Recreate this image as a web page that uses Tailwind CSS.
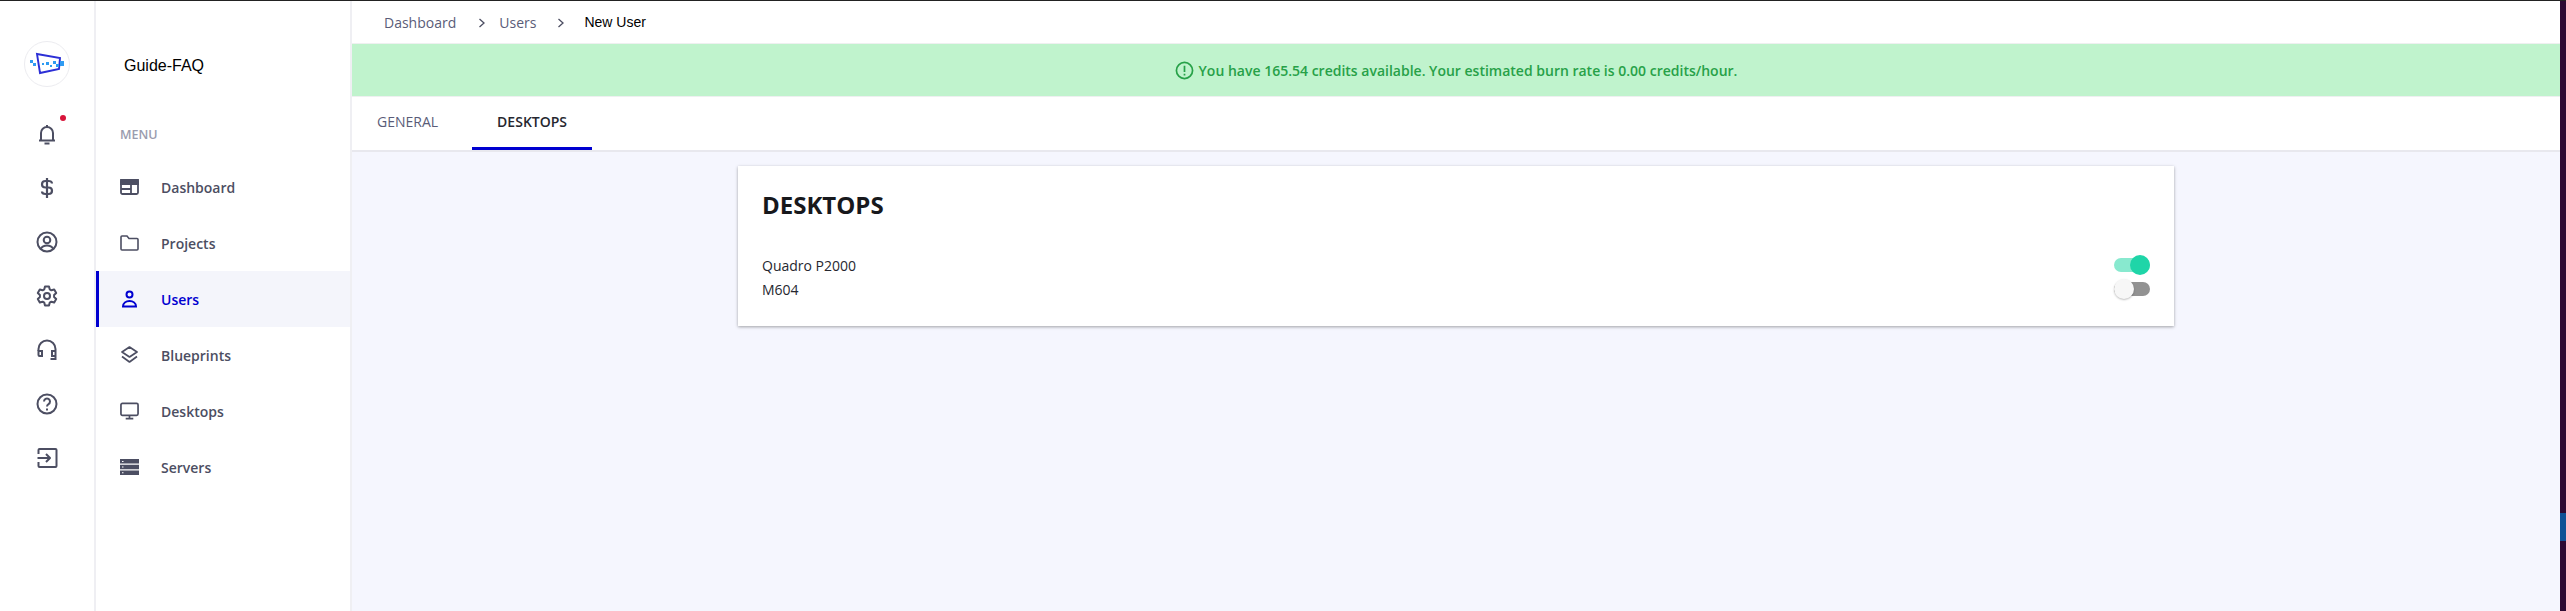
<!DOCTYPE html>
<html lang="en">
  <head>
    <meta charset="utf-8" />
    <title>New User</title>
    <script src="https://cdn.jsdelivr.net/npm/@tailwindcss/browser@4"></script>
  </head>
  <body class="h-screen overflow-hidden bg-white font-['Open_Sans',sans-serif]">
    <div class="h-px bg-[#222222]"></div>
    <div class="flex h-[610px]">
      <!-- Icon rail -->
      <div class="w-[96px] shrink-0 border-r-2 border-[#efeff3] flex flex-col items-center text-[#4c4e62]">
        <div class="mt-[40px] w-[46px] h-[46px] rounded-full border border-[#ececf0] flex items-center justify-center">
          <svg width="38" height="26" viewBox="0 0 38 26" fill="none">
            <path d="M9 3 L32 7 L31 18 L12 22 Z" stroke="#2c2fd6" stroke-width="1.900" />
            <g fill="#2f9bf2">
              <rect x="2" y="9" width="3" height="3" /><rect x="5" y="12" width="3" height="3" /><rect x="14" y="12" width="2" height="2" />
              <rect x="18" y="11" width="3" height="3" /><rect x="22" y="14" width="2" height="2" /><rect x="25" y="10" width="3" height="3" />
              <rect x="28" y="13" width="3" height="3" /><rect x="32" y="10" width="4" height="5" />
            </g>
          </svg>
        </div>
        <div class="mt-[29px] flex flex-col gap-[18px]">
          <div class="relative w-9 h-9 flex items-center justify-center">
            <span class="absolute right-[-1px] top-[-1px] w-[6px] h-[6px] rounded-full bg-[#d8143a]"></span>
            <svg width="24" height="24" viewBox="0 0 24 24" fill="none" stroke="currentColor" stroke-width="2"><path d="M4 18.500h16M6 18V11a6 6 0 0 1 12 0v7M9.500 21.500h5M12 3v2" /></svg>
          </div>
          <div class="w-9 h-9 flex items-center justify-center">
            <svg width="24" height="24" viewBox="0 0 24 24" fill="none" stroke="currentColor" stroke-width="2.200"><path d="M17 7.500C17 6 15.500 5 13.500 5h-3C8.500 5 7 6.300 7 8.200S8.500 11.500 10.500 11.500h3c2 0 3.500 1.300 3.500 3.200S15.500 18 13.500 18h-3C8.500 18 7 17 7 15.500M12 2v20" /></svg>
          </div>
          <div class="w-9 h-9 flex items-center justify-center">
            <svg width="24" height="24" viewBox="0 0 24 24" fill="none" stroke="currentColor" stroke-width="2"><circle cx="12" cy="12" r="9.500" /><circle cx="12" cy="10" r="3.300" /><path d="M5.500 19c1.500-2.500 4-3.500 6.500-3.500s5 1 6.500 3.500" /></svg>
          </div>
          <div class="w-9 h-9 flex items-center justify-center">
            <svg width="24" height="24" viewBox="0 0 24 24" fill="none" stroke="currentColor" stroke-width="2" stroke-linejoin="round"><path d="M10 2.500h4l.7 2.800 1.700 1 2.800-.8 2 3.500-2.100 2v2l2.100 2-2 3.500-2.800-.8-1.700 1-.7 2.800h-4l-.7-2.800-1.700-1-2.800.8-2-3.500 2.100-2v-2l-2.100-2 2-3.500 2.800.8 1.700-1z" /><circle cx="12" cy="12" r="3" /></svg>
          </div>
          <div class="w-9 h-9 flex items-center justify-center">
            <svg width="24" height="24" viewBox="0 0 24 24" fill="none" stroke="currentColor" stroke-width="2"><path d="M3.500 13v-2a8.500 8.500 0 0 1 17 0v10h-5" /><path d="M3.500 13h3.500v5H4.500a1 1 0 0 1-1-1zM20.500 13H17v5h3.500" /></svg>
          </div>
          <div class="w-9 h-9 flex items-center justify-center">
            <svg width="24" height="24" viewBox="0 0 24 24" fill="none" stroke="currentColor" stroke-width="2"><circle cx="12" cy="12" r="9.500" /><path d="M9 9.500a3 3 0 1 1 4.500 2.600c-1 .6-1.500 1.100-1.500 2.400" /><path d="M12 16.500v2" /></svg>
          </div>
          <div class="w-9 h-9 flex items-center justify-center">
            <svg width="24" height="24" viewBox="0 0 24 24" fill="none" stroke="currentColor" stroke-width="2" stroke-linejoin="round"><path d="M3.500 8V4a1 1 0 0 1 1-1h16a1 1 0 0 1 1 1v16a1 1 0 0 1-1 1h-16a1 1 0 0 1-1-1v-4" /><path d="M2.500 12h12M11 8l4 4-4 4" /></svg>
          </div>
        </div>
      </div>

      <!-- Menu sidebar -->
      <div class="w-[256px] shrink-0 border-r-2 border-[#efeff3]">
        <p class="pl-[28px] pt-[56px] font-['Liberation_Sans',sans-serif] text-[16px] leading-[18px] text-black">Guide-FAQ</p>
        <p class="pl-[24px] mt-[51px] text-[12.500px] leading-[18px] font-semibold text-[#9a9cae]">MENU</p>
        <nav class="mt-[15px] text-[14px] font-semibold text-[#4c4e62]">
          <a class="flex items-center h-[56px] pl-[24px] gap-[22px]">
            <svg class="shrink-0" width="19" height="16" viewBox="0 0 19 16" fill="none" stroke="currentColor" stroke-width="1.800"><rect x="1" y="1" width="17" height="14" rx="1.500" /><path d="M1 1h17v4H1z" fill="currentColor" /><path d="M1 10h10M11 5v10" /></svg>
            Dashboard
          </a>
          <a class="flex items-center h-[56px] pl-[24px] gap-[22px]">
            <svg class="shrink-0" width="19" height="16" viewBox="0 0 19 16" fill="none" stroke="currentColor" stroke-width="1.600"><path d="M1 2a1 1 0 0 1 1-1h5l2 2.500h8a1 1 0 0 1 1 1V14a1 1 0 0 1-1 1H2a1 1 0 0 1-1-1z" /></svg>
            Projects
          </a>
          <a class="flex items-center h-[56px] pl-[21px] gap-[22px] border-l-[3px] border-[#0000d0] bg-[#f4f5fb] text-[#0000d0]">
            <svg class="shrink-0" width="19" height="18" viewBox="0 0 19 18" fill="none" stroke="currentColor" stroke-width="2"><circle cx="9.500" cy="4.500" r="3" /><path d="M3 16.500c0-3.500 3-5.500 6.500-5.500s6.500 2 6.500 5.500z" /></svg>
            Users
          </a>
          <a class="flex items-center h-[56px] pl-[24px] gap-[22px]">
            <svg class="shrink-0" width="19" height="18" viewBox="0 0 19 18" fill="none" stroke="currentColor" stroke-width="1.700" stroke-linejoin="round"><path d="M9.500 1l7.500 5-7.500 5-7.500-5z" /><path d="M2 10.500l7.500 5.500 7.500-5.500" /></svg>
            Blueprints
          </a>
          <a class="flex items-center h-[56px] pl-[24px] gap-[22px]">
            <svg class="shrink-0" width="19" height="18" viewBox="0 0 20 18" fill="none" stroke="currentColor" stroke-width="1.800"><rect x="1" y="1" width="18" height="12.500" rx="1.500" /><path d="M10 13.500V17M6 17h8" /></svg>
            Desktops
          </a>
          <a class="flex items-center h-[56px] pl-[24px] gap-[22px]">
            <svg class="shrink-0" width="19" height="16" viewBox="0 0 19 16" fill="currentColor"><path d="M0 0h19v4.500H0zM0 5.700h19v4.500H0zM0 11.400h19V16H0z" /><path d="M2 2h1.500v1H2zM2 7.500h1.500v1H2zM2 13.200h1.500v1H2z" fill="#fff" /></svg>
            Servers
          </a>
        </nav>
      </div>

      <!-- Main -->
      <div class="flex-1 flex flex-col bg-[#f5f6fe]">
        <div class="h-[42px] bg-white flex items-center pl-[32px] pt-[1px] text-[14px] text-[#5a5c78]">
          <span>Dashboard</span>
          <svg class="ml-[22px] mr-[13px]" width="8" height="10" viewBox="0 0 8 10" fill="none" stroke="#4c4e62" stroke-width="1.300"><path d="M1.500 1l4.500 4-4.500 4" /></svg>
          <span>Users</span>
          <svg class="ml-[21px] mr-[19px]" width="8" height="10" viewBox="0 0 8 10" fill="none" stroke="#4c4e62" stroke-width="1.300"><path d="M1.500 1l4.500 4-4.500 4" /></svg>
          <span class="font-['Liberation_Sans',sans-serif] text-[14px] text-black">New User</span>
        </div>
        <div class="h-[54px] border-y border-[#eef0f0] bg-[#c0f3cd] flex items-center justify-center gap-[5px] text-[14px] font-semibold text-[#27a148]">
          <svg width="19" height="19" viewBox="0 0 20 20" fill="none" stroke="currentColor" stroke-width="1.800"><circle cx="10" cy="10" r="8.500" /><path d="M10 5v6.500M10 13.300v2" /></svg>
          <span>You have 165.54 credits available. Your estimated burn rate is 0.00 credits/hour.</span>
        </div>
        <div class="h-[55px] bg-white border-b-2 border-[#e8e8ee] flex text-[14px]">
          <div class="h-[53px] px-[25px] pb-[4px] flex items-center text-[#5a5c78]">GENERAL</div>
          <div class="ml-[9px] h-[53px] w-[120px] pb-[1px] flex items-center justify-center font-semibold text-[#26272f] border-b-[3px] border-[#0000d0]">DESKTOPS</div>
        </div>
        <div class="mt-[14px] mx-auto w-[1436px] h-[160px] bg-white shadow-[0_1px_3px_rgba(0,0,0,0.35)] px-[24px] pt-[21px]">
          <h2 class="text-[24px] leading-[36px] font-bold text-[#17181c]">DESKTOPS</h2>
          <div class="mt-[30px] text-[14px] text-[#26272f]">
            <div class="flex items-center justify-between h-[24px]">
              <span>Quadro P2000</span>
              <div class="relative w-[36px] h-[14px] rounded-full bg-[#88e9cf]">
                <span class="absolute right-0 top-[-3px] w-[20px] h-[20px] rounded-full bg-[#1fd5a8]"></span>
              </div>
            </div>
            <div class="flex items-center justify-between h-[24px]">
              <span>M604</span>
              <div class="relative w-[36px] h-[14px] rounded-full bg-[#929292]">
                <span class="absolute left-0 top-[-3px] w-[20px] h-[20px] rounded-full bg-[#f7f7f7] shadow-[0_1px_2px_rgba(0,0,0,0.25)]"></span>
              </div>
            </div>
          </div>
        </div>
      </div>

      <!-- Desktop edge behind the window -->
      <div class="w-[6px] shrink-0 bg-[#2d0a33] pt-[512px]">
        <div class="h-[28px] bg-[#0f5296]"></div>
      </div>
    </div>
  </body>
</html>
